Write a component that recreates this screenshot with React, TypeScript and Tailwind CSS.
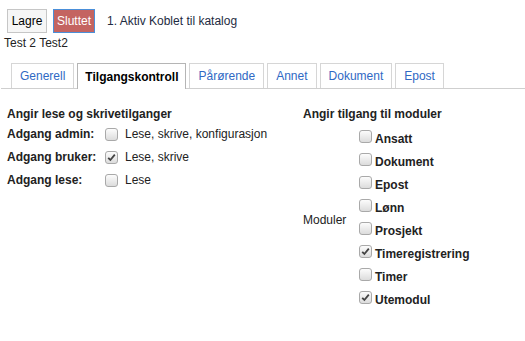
import React from 'react';

const tabs = ['Generell', 'Tilgangskontroll', 'Pårørende', 'Annet', 'Dokument', 'Epost'];

const access = [
  { label: 'Adgang admin:', text: 'Lese, skrive, konfigurasjon', checked: false },
  { label: 'Adgang bruker:', text: 'Lese, skrive', checked: true },
  { label: 'Adgang lese:', text: 'Lese', checked: false },
];

const modules = [
  { name: 'Ansatt', checked: false },
  { name: 'Dokument', checked: false },
  { name: 'Epost', checked: false },
  { name: 'Lønn', checked: false },
  { name: 'Prosjekt', checked: false },
  { name: 'Timeregistrering', checked: true },
  { name: 'Timer', checked: false },
  { name: 'Utemodul', checked: true },
];

// old-style grey checkbox
const Check = ({ checked }: { checked: boolean }) => (
  <span className="w-[13px] h-[13px] shrink-0 rounded-[3px] border border-[#a9a9a9] bg-gradient-to-b from-[#fcfcfc] to-[#dcdcdc] flex items-center justify-center">
    {checked && (
      <svg width="9" height="9" viewBox="0 0 9 9">
        <path d="M1.2 4.8 L3.4 7 L7.8 1.6" fill="none" stroke="#444" strokeWidth="1.8" />
      </svg>
    )}
  </span>
);

export default function App() {
  return (
    <div className="w-[525px] h-[341px] bg-white text-[12px] text-[#222] font-[family-name:Liberation_Sans] leading-none">
      <div className="flex items-center pl-[7px] pt-[9px] h-[33px]">
        <button className="w-[40px] h-[24px] border border-[#c6c6c6] bg-[#f6f6f6] text-black">Lagre</button>
        <button className="ml-[6px] w-[42px] h-[24px] border border-[#4a8fd9] bg-[#c46461] text-white">Sluttet</button>
        <span className="ml-[12px] text-[#1e2b42]">1. Aktiv Koblet til katalog</span>
      </div>
      <div className="pl-[4px] h-[16px] mt-[2px] flex items-center">Test 2 Test2</div>

      <div className="mt-[12px] ml-px border-b border-[#cfcfcf] flex items-end h-[26px] pl-[10px] gap-[3px]">
        {tabs.map((t, i) =>
          i === 1 ? (
            <div
              key={t}
              className="h-[26px] -mb-px px-[7px] flex items-center border border-b-0 border-[#b5b5b5] bg-white font-bold text-black"
            >
              {t}
            </div>
          ) : (
            <div
              key={t}
              className="h-[25px] px-[8px] flex items-center border border-b-0 border-[#d6d6d6] text-[#2f69c4]"
            >
              {t}
            </div>
          )
        )}
      </div>

      <div className="flex pl-[7px] pt-[18px]">
        <div className="w-[296px]">
          <div className="font-bold h-[14px] flex items-center">Angir lese og skrivetilganger</div>
          <div className="mt-[6px] flex flex-col gap-[9px]">
            {access.map((a) => (
              <div key={a.label} className="flex items-center h-[14px]">
                <span className="w-[98px] font-bold">{a.label}</span>
                <Check checked={a.checked} />
                <span className="ml-[7px]">{a.text}</span>
              </div>
            ))}
          </div>
        </div>
        <div>
          <div className="font-bold h-[14px] flex items-center">Angir tilgang til moduler</div>
          <div className="flex items-center mt-[11px]">
            <span className="w-[56px]">Moduler</span>
            <div className="flex flex-col gap-[9px]">
              {modules.map((m) => (
                <div key={m.name} className="flex items-center h-[14px]">
                  <span className="-mt-[5px]">
                    <Check checked={m.checked} />
                  </span>
                  <span className="ml-[3px] font-bold">{m.name}</span>
                </div>
              ))}
            </div>
          </div>
        </div>
      </div>
    </div>
  );
}
